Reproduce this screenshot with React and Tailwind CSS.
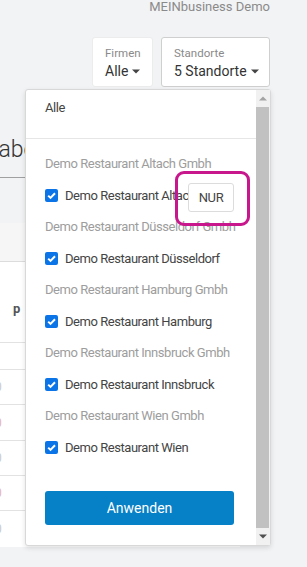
import React from "react";

const groups = [
  { firm: "Demo Restaurant Altach Gmbh", site: "Demo Restaurant Altach", only: true },
  { firm: "Demo Restaurant Düsseldorf Gmbh", site: "Demo Restaurant Düsseldorf" },
  { firm: "Demo Restaurant Hamburg Gmbh", site: "Demo Restaurant Hamburg" },
  { firm: "Demo Restaurant Innsbruck Gmbh", site: "Demo Restaurant Innsbruck" },
  { firm: "Demo Restaurant Wien Gmbh", site: "Demo Restaurant Wien" },
];

const rows = [
  { h: "h-[35px]", c: "text-[#c9c9c9]" },
  { h: "h-[36px]", c: "text-[#e3b3b3]" },
  { h: "h-[35px]", c: "text-[#c9c9c9]" },
  { h: "h-[35px]", c: "text-[#e3b3b3]" },
  { h: "h-[36px]", c: "text-[#c9c9c9]" },
];

function Caret({ className }) {
  return (
    <svg width="8" height="5" viewBox="0 0 8 5" className={className}>
      <path d="M0 0.5h8L4 4.5z" fill="currentColor" />
    </svg>
  );
}

function Check() {
  return (
    <span className="flex h-[13px] w-[13px] shrink-0 items-center justify-center rounded-[2px] bg-[#0b75e8]">
      <svg width="11" height="11" viewBox="0 0 11 11">
        <path d="M2.2 5.6l2.3 2.3L9 3.2" fill="none" stroke="#fff" strokeWidth="2" />
      </svg>
    </span>
  );
}

function FilterBox({ label, value, width, border }) {
  return (
    <div className={`h-[50px] ${width} rounded-[3px] border ${border} bg-white pl-[12px] pt-[8px]`}>
      <div className="text-[11.5px] leading-[14px] text-[#8a8a8a]">{label}</div>
      <div className="mt-[2px] flex items-center gap-[4px] text-[14px] leading-[18px] text-[#333]">
        {value}
        <Caret className="text-[#444]" />
      </div>
    </div>
  );
}

export default function App() {
  return (
    <div className="relative h-[567px] w-[307px] overflow-hidden bg-[#f2f3f5] font-['Roboto',sans-serif]">
      <div className="pr-[37px] text-right text-[13px] leading-[14px] text-[#8a8a8a]">MEINbusiness Demo</div>

      <div className="mt-[23px] flex justify-end gap-[8px] pr-[37px]">
        <FilterBox label="Firmen" value="Alle" width="w-[61px]" border="border-[#ececec]" />
        <FilterBox label="Standorte" value="5 Standorte" width="w-[109px]" border="border-[#cfcfcf]" />
      </div>

      {/* page content behind the dropdown */}
      <div className="mt-[50px] h-[41px] w-[240px] border-b border-[#a0a0a0]">
        <div className="-ml-[14px] text-[23px] font-light leading-[26px] text-[#333]">Tabellen</div>
      </div>
      <div className="h-[45px]" />
      <div className="h-[39px] w-[240px] border-b border-[#dcdcdc] bg-[#f6f6f6]" />
      <div className="w-[240px] bg-white">
        <div className="flex h-[81px] items-end gap-[13px] border-b border-[#e2e2e2] pb-[24px]">
          <span className="-ml-[4px] text-[12px] text-[#c9c9c9]">t</span>
          <span className="text-[13px] font-bold text-[#555]">p</span>
        </div>
        <div className="h-[27px] border-b border-[#e2e2e2]" />
        {rows.map((r, i) => (
          <div key={i} className={`flex ${r.h} items-center border-b border-[#e2e2e2] last:border-b-0`}>
            <span className={`-ml-[5px] text-[12px] ${r.c}`}>0</span>
          </div>
        ))}
      </div>

      {/* Standorte dropdown */}
      <div className="absolute left-[25px] top-[89px] flex h-[457px] w-[246px] rounded-[3px] border border-[#d8d8d8] bg-white shadow-[0_2px_5px_rgba(0,0,0,0.12)]">
        <div className="flex-1">
          <div className="h-[49px] border-b border-[#e6e6e6] pl-[19px] pt-[10px] text-[13px] leading-[16px] tracking-[-0.4px] text-[#444]">
            Alle
          </div>
          <div className="pt-[9px]">
            {groups.map((g) => (
              <div key={g.firm}>
                <div className="flex h-[32px] items-center whitespace-nowrap pl-[19px] text-[13px] tracking-[-0.45px] text-[#9d9d9d]">
                  {g.firm}
                </div>
                <div className="relative flex h-[31px] items-center gap-[7px] whitespace-nowrap pl-[19px] text-[13px] tracking-[-0.45px] text-[#444]">
                  <Check />
                  <span>{g.site}</span>
                  {g.only && (
                    <>
                      <div className="absolute left-[162px] top-[3px] flex h-[29px] w-[46px] items-center justify-center rounded-[3px] border border-[#dcdcdc] bg-white text-[13px] tracking-[-0.4px] text-[#444]">
                        NUR
                      </div>
                      <div className="absolute left-[149px] top-[-9px] h-[55px] w-[75px] rounded-[9px] border-[3px] border-[#c8168c]" />
                    </>
                  )}
                </div>
              </div>
            ))}
          </div>
          <button
            type="button"
            className="ml-[19px] mt-[28px] h-[34px] w-[189px] rounded-[3px] bg-[#0680c6] text-[14px] text-white"
          >
            Anwenden
          </button>
        </div>

        <div className="flex w-[14px] flex-col bg-[#f1f1f1]">
          <div className="flex h-[17px] items-center justify-center text-[#a3a3a3]">
            <Caret className="rotate-180" />
          </div>
          <div className="mr-[1px] flex-1 bg-[#c1c1c1]" />
          <div className="flex h-[17px] items-center justify-center text-[#505050]">
            <Caret />
          </div>
        </div>
      </div>
    </div>
  );
}
